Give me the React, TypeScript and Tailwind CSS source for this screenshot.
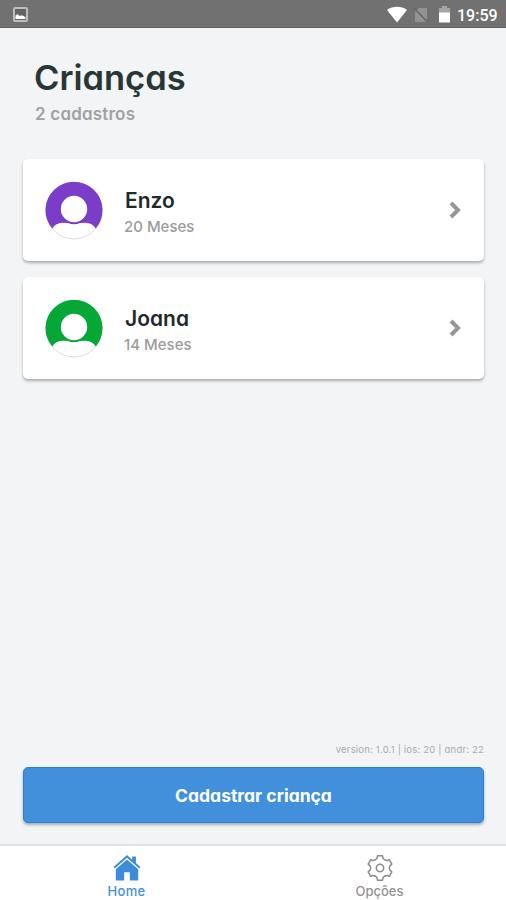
import clsx from "clsx";

type Child = { id: string; name: string; age: string; color: string };

const children: Child[] = [
  { id: "1", name: "Enzo", age: "20 Meses", color: "#7a3cc9" },
  { id: "2", name: "Joana", age: "14 Meses", color: "#05a737" },
];

function StatusBar() {
  return (
    <header className="flex h-7 shrink-0 items-center justify-between border-b border-[#626262] bg-[#717171] pl-[13px] pr-[9px] pt-[2px]">
      <svg className="h-[15px] w-[15px]" viewBox="0 0 15 15">
        <rect x="1" y="1" width="13" height="13" rx="1" fill="#636363" stroke="#bdbdbd" strokeWidth="2" />
        <path d="M2.500 12V8.500l2-1.500 2.300 2 2-0.800 3.700 1.800v2z" fill="#fff" />
      </svg>
      <div className="flex items-center">
        <svg className="h-[17px] w-5" viewBox="0 0 20 17">
          <path d="M0 4C5.800-.4 14.200-.4 20 4L10 16.500z" fill="#fff" />
        </svg>
        <svg className="ml-[6px] h-4 w-4" viewBox="0 0 16 16">
          <path d="M2 5l4-4h8v14H2z" fill="#929292" />
          <path d="M1 1l14 14.500" stroke="#666" strokeWidth="1.500" />
        </svg>
        <svg className="ml-[9px] h-[17px] w-[13px]" viewBox="0 0 13 17">
          <path d="M1 2h3V0h5v2h3v5H1z" fill="#a5a5a5" />
          <path d="M1 6.500h11V16.500H1z" fill="#fff" />
        </svg>
        <span className="ml-[6px] mt-[3px] w-[40px] whitespace-nowrap font-['Roboto',sans-serif] text-[16px] font-medium leading-none text-white">
          19:59
        </span>
      </div>
    </header>
  );
}

function Avatar({ color }: { color: string }) {
  return (
    <svg className="mt-px h-[60px] w-[58px] shrink-0" viewBox="0 0 58 60">
      <circle cx="29" cy="30" r="28" fill="#fff" stroke="#dcdcdc" />
      <path
        d="M7.200 47.500A28.500 28.500 0 1 1 50.800 47.500C48.500 44 45 42 40.500 41.800L35 42Q29 44.500 23 42L17.500 41.800C13 42 9.500 44 7.200 47.500Z"
        fill={color}
      />
      <circle cx="29" cy="28" r="13.200" fill="#fff" />
    </svg>
  );
}

function ChildCard({ child }: { child: Child }) {
  return (
    <button className="flex h-[102px] w-full items-center rounded-[5px] bg-white px-[22px] text-left shadow-[0_2px_3px_rgba(0,0,0,0.3)]">
      <Avatar color={child.color} />
      <div className="ml-[22px] flex-1 pt-[7px]">
        <p className="text-[21px] font-semibold leading-[26px] text-[#1f2a2a]">{child.name}</p>
        <p className="-ml-px text-[15px] font-medium leading-[26px] text-[#9b9b9b]">{child.age}</p>
      </div>
      <svg className="h-[18px] w-[14px]" viewBox="0 0 14 18" fill="none">
        <path d="M3 2l7 7-7 7" stroke="#969696" strokeWidth="4" />
      </svg>
    </button>
  );
}

function HomeIcon() {
  return (
    <svg className="h-[26px] w-7 shrink-0" viewBox="0 0 28 26" fill="#3d8bdb">
      <path d="M14 0L0.600 12l1.200 1.500L14 2.700l12.200 10.800 1.200-1.500-4.500-4V1.500h-3.700v3.200z" />
      <path d="M14 4.500L2.800 14.300V25.500h8.400v-8.300h5.600v8.300h8.400V14.300z" />
    </svg>
  );
}

function GearIcon() {
  return (
    <svg className="h-[26px] w-7 shrink-0" viewBox="-14 -13 28 26" fill="none" stroke="#8c8c8c" strokeWidth="1.5" strokeLinejoin="round">
      <path d="M-2.500-12.200H2.500L3.100-9.600Q4.300-7.500 6.800-7.500L9.300-8.300L11.800-3.900L9.900-2.100Q8.700 0 9.900 2.100L11.800 3.900L9.300 8.300L6.800 7.500Q4.300 7.500 3.100 9.600L2.500 12.200H-2.500L-3.100 9.600Q-4.300 7.500-6.800 7.500L-9.300 8.300L-11.800 3.900L-9.900 2.100Q-8.700 0-9.900-2.100L-11.800-3.900L-9.300-8.300L-6.800-7.500Q-4.300-7.500-3.100-9.600Z" />
      <circle r="3.700" />
    </svg>
  );
}

function TabBar() {
  const tabs = [
    { label: "Home", icon: <HomeIcon />, active: true },
    { label: "Opções", icon: <GearIcon />, active: false },
  ];

  return (
    <nav className="flex h-14 shrink-0 border-t-2 border-[#e1e2e4] bg-white">
      {tabs.map((tab) => (
        <button
          key={tab.label}
          className={clsx(
            "flex flex-1 flex-col items-center justify-start pt-[9px] text-[13px] font-medium leading-[20px]",
            tab.active ? "text-[#438edb] tracking-[0.3px]" : "text-[#929292]"
          )}
        >
          {tab.icon}
          <span>{tab.label}</span>
        </button>
      ))}
    </nav>
  );
}

export default function App() {
  return (
    <div className="flex h-[900px] w-full flex-col overflow-hidden bg-[#f2f4f6] font-['Inter','Open_Sans',sans-serif] [font-feature-settings:'cv11']">
      <StatusBar />
      <main className="flex flex-1 flex-col pl-[23px] pr-[22px]">
        <div className="px-3 pt-[28px]">
          <h1 className="-ml-px text-[34.500px] font-semibold leading-[44px] text-[#263735]">Crianças</h1>
          <p className="text-[17px] font-semibold leading-[28px] tracking-[0.2px] text-[#a0a2a3]">2 cadastros</p>
        </div>
        <div className="mt-[31px] flex flex-col gap-4">
          {children.map((child) => (
            <ChildCard key={child.id} child={child} />
          ))}
        </div>
        <div className="mb-[21px] mt-auto">
          <p className="mb-[9px] text-right text-[9.500px] leading-[16px] tracking-[0.2px] text-[#a9abad]">
            version: 1.0.1 | ios: 20 | andr: 22
          </p>
          <button className="h-14 w-full rounded-[5px] border border-[#2583d3] bg-[#428fdc] pt-[2px] text-[17.500px] font-bold text-white shadow-[0_2px_3px_rgba(0,0,0,0.3)]">
            Cadastrar criança
          </button>
        </div>
      </main>
      <TabBar />
    </div>
  );
}
